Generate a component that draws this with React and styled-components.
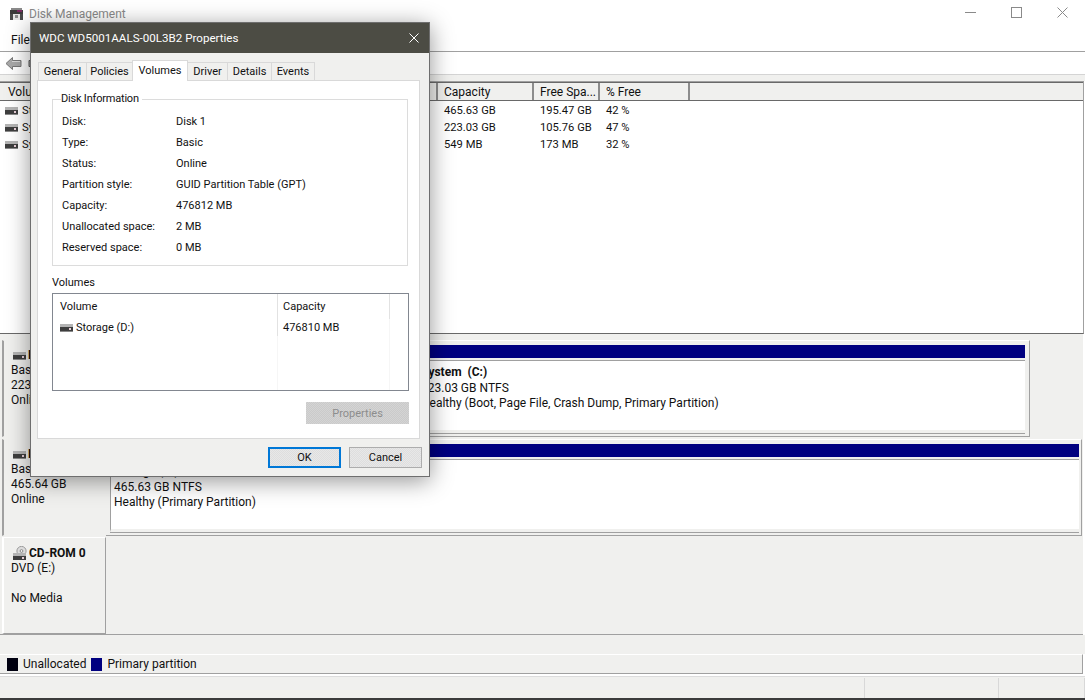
import { Fragment } from "react"
import styled, { createGlobalStyle } from "styled-components"

const GlobalStyle = createGlobalStyle`
  html, body {
    margin: 0;
    padding: 0;
    background: #fff;
  }
  body {
    font-family: "Roboto", "Liberation Sans", sans-serif;
    font-size: 12px;
    color: #111;
  }
`

const Desktop = styled.div`
  position: relative;
  width: 1085px;
  height: 700px;
  overflow: hidden;
  display: flex;
  flex-direction: column;
  background: #fff;
`

const TitleBar = styled.div`
  height: 26px;
  flex: none;
  display: flex;
  align-items: center;
  padding: 2px 0 0 9px;
  box-sizing: border-box;
  color: #8a8a8a;
  gap: 5px;
`

const WindowControls = styled.div`
  margin-left: auto;
  display: flex;
  align-items: center;
  margin-top: -3px;
`

const ControlSlot = styled.span`
  width: 46px;
  height: 14px;
  display: flex;
  align-items: center;
  justify-content: center;
`

const MenuBar = styled.div`
  height: 26px;
  flex: none;
  box-sizing: border-box;
  border-bottom: 1px solid #a0a0a0;
  display: flex;
  align-items: center;
  padding: 3px 0 0 11px;
`

const Toolbar = styled.div`
  height: 23px;
  flex: none;
  box-sizing: border-box;
  border-bottom: 1px solid #d4d4d4;
  display: flex;
  align-items: center;
  padding-left: 5px;
  gap: 6px;
`

const Band = styled.div`
  height: 6px;
  flex: none;
  background: #f0f0ee;
`

const VolumeTable = styled.div`
  height: 253px;
  flex: none;
  box-sizing: border-box;
  margin-right: 1px;
  border-top: 1px solid #a0a0a0;
  border-bottom: 1px solid #696969;
  border-right: 1px solid #a0a0a0;
  background: #fff;
`

const columns = "102px 60px 55px 70px 151px 96px 66px 90px 1fr"

const TableHead = styled.div`
  display: grid;
  grid-template-columns: ${columns};
  height: 19px;
  box-sizing: border-box;
  background: #f0f0ee;
  border-top: 1px solid #696969;
  border-bottom: 1px solid #696969;
  margin-bottom: 1px;
`

const TableRow = styled.div`
  display: grid;
  grid-template-columns: ${columns};
  align-items: center;
  height: 17px;
  font-size: 11.2px;
`

const HeadCell = styled.div`
  display: flex;
  align-items: center;
  padding: 1px 0 0 6px;
  box-sizing: border-box;
  border-right: 2px solid #8c8c8c;
  white-space: nowrap;
  overflow: hidden;
  &:first-child {
    padding-left: 8px;
  }
  &:last-child {
    border-right: none;
  }
`

const Cell = styled.div`
  display: flex;
  align-items: center;
  gap: 4px;
  padding-left: 6px;
  white-space: nowrap;
  overflow: hidden;
  &:first-child {
    padding-left: 5px;
  }
`

const DiskArea = styled.div`
  height: 301px;
  flex: none;
  box-sizing: border-box;
  background: #f0f0ee;
  padding-top: 6px;
  border-bottom: 1px solid #a0a0a0;
  margin-right: 2px;
`

const DiskRow = styled.div`
  display: grid;
  grid-template-columns: 106px 1fr;
  height: 97px;
  margin-top: ${({ $gap }) => $gap || 0}px;
`

const DiskLabel = styled.div`
  margin-left: 2px;
  padding: ${({ $raised }) => ($raised ? "8px" : "7px")} 0 0 7px;
  box-sizing: border-box;
  line-height: 15px;
  border-left: 2px solid ${({ $raised }) => ($raised ? "#fff" : "#a0a0a0")};
  border-right: 1px solid ${({ $raised }) => ($raised ? "#a0a0a0" : "#f0f0ee")};
  border-top: 1px solid ${({ $raised }) => ($raised ? "#fff" : "#f0f0ee")};
  border-bottom: 1px solid ${({ $raised }) => ($raised ? "#a0a0a0" : "#f0f0ee")};
`

const DiskTitle = styled.div`
  display: flex;
  align-items: center;
  gap: 2px;
  height: 15px;
  font-weight: 700;
  margin-left: 2px;
`

const Spacer = styled.div`
  height: 15px;
`

const PartitionRow = styled.div`
  display: flex;
  height: 100%;
`

const Partition = styled.div`
  width: ${({ $width }) => $width}px;
  flex: none;
  box-sizing: border-box;
  display: flex;
  flex-direction: column;
  padding: 4px ${({ $inset }) => $inset}px 3px 4px;
  border-top: 1px solid #fff;
  border-right: 1px solid #a0a0a0;
  border-bottom: 1px solid #a0a0a0;
`

const PartitionBar = styled.div`
  height: 13px;
  flex: none;
  background: #000080;
`

const PartitionBody = styled.div`
  flex: 1;
  margin-top: 2px;
  padding: 4px 0 0 3px;
  background: #fff;
  border-top: 1px solid #a0a0a0;
  border-left: 1px solid #a0a0a0;
  border-bottom: 3px solid #f0f0ee;
  box-shadow: 0 1px 0 #a0a0a0;
  line-height: 15.5px;
  white-space: nowrap;
  overflow: hidden;
`

const PartitionName = styled.div`
  font-weight: 700;
  white-space: pre;
`

const LegendGap = styled.div`
  height: 19px;
  flex: none;
  background: #f0f0ee;
`

const LegendBar = styled.div`
  height: 20px;
  flex: none;
  box-sizing: border-box;
  background: #f0f0ee;
  border-top: 1px solid #fff;
  border-bottom: 1px solid #a0a0a0;
  border-right: 1px solid #a0a0a0;
  margin-right: 2px;
  display: flex;
  align-items: center;
  padding-left: 7px;
`

const Swatch = styled.span`
  width: 11px;
  height: 13px;
  flex: none;
  background: ${({ $color }) => $color};
  margin-right: 5px;
`

const LegendText = styled.span`
  margin-right: 5px;
`

const StatusBar = styled.div`
  flex: 1;
  display: flex;
  background: #f0f0ee;
  border-top: 1px solid #dcdcdc;
  margin-top: 2px;
  padding-top: 1px;
  border-bottom: 2px solid #3c3c3c;
`

const StatusPane = styled.div`
  width: ${({ $width }) => $width}px;
  flex: none;
  border-right: 1px solid #d8d8d8;
`

/* properties dialog floats over the console */
const Dialog = styled.div`
  position: absolute;
  left: 30px;
  top: 22px;
  width: 400px;
  height: 455px;
  box-sizing: border-box;
  background: #f0f0ee;
  border: 1px solid #6e6e6e;
  box-shadow: 0 4px 22px rgba(0, 0, 0, 0.42);
  display: flex;
  flex-direction: column;
  font-size: 11px;
`

const DialogTitle = styled.div`
  height: 30px;
  flex: none;
  background: #4c4c44;
  color: #fff;
  display: flex;
  align-items: center;
  justify-content: space-between;
  padding: 0 10px 0 8px;
  font-size: 11.6px;
`

const TabStrip = styled.div`
  display: flex;
  align-items: flex-end;
  height: 27px;
  margin-left: 8px;
  flex: none;
`

const Tab = styled.div`
  width: ${({ $width }) => $width}px;
  height: ${({ $active }) => ($active ? "21px" : "18px")};
  box-sizing: border-box;
  display: flex;
  align-items: center;
  justify-content: center;
  padding-bottom: ${({ $active }) => ($active ? "2px" : "0")};
  border: 1px solid #d9d9d9;
  border-bottom: none;
  margin-left: -1px;
  background: ${({ $active }) => ($active ? "#fff" : "#f0f0ee")};
  position: relative;
  z-index: ${({ $active }) => ($active ? 2 : 1)};
  margin-bottom: ${({ $active }) => ($active ? "-1px" : "0")};
`

const TabPage = styled.div`
  height: 359px;
  flex: none;
  margin: 0 9px 0 6px;
  box-sizing: border-box;
  background: #fff;
  border: 1px solid #d9d9d9;
  padding: 11px 10px 0 14px;
  display: flex;
  flex-direction: column;
`

const InfoGroup = styled.fieldset`
  height: 174px;
  margin: 0 1px 0 0;
  padding: 0 0 0 9px;
  box-sizing: border-box;
  border: 1px solid #dcdcdc;
  min-inline-size: 0;
  flex: none;
`

const InfoLegend = styled.legend`
  padding: 0 3px 0 0;
  margin-left: -1px;
  line-height: 14px;
  letter-spacing: -0.2px;
`

const InfoGrid = styled.div`
  display: grid;
  grid-template-columns: 114px 1fr;
  grid-auto-rows: 21px;
  align-items: center;
  margin-top: 5px;
`

const SectionLabel = styled.div`
  margin-top: 10px;
  height: 17px;
  line-height: 14px;
`

const VolumeList = styled.div`
  height: 98px;
  flex: none;
  box-sizing: border-box;
  border: 1px solid #828790;
  display: grid;
  grid-template-columns: 225px 112px 1fr;
  grid-template-rows: 25px 17px 1fr;
`

const ListCell = styled.div`
  display: flex;
  align-items: center;
  gap: 3px;
  padding-left: ${({ $first }) => ($first ? "7px" : "5px")};
  border-right: ${({ $last }) => ($last ? "none" : "1px solid")};
  border-right-color: ${({ $faint }) => ($faint ? "#f6f6f6" : "#e2e2e2")};
`

const DisabledButton = styled.div`
  width: 103px;
  height: 22px;
  margin: 11px 0 0 auto;
  flex: none;
  display: flex;
  align-items: center;
  justify-content: center;
  color: #8d8d8d;
  background: repeating-conic-gradient(#cacaca 0 25%, #d4d4d4 0 50%) 0 0 / 2px 2px;
`

const DialogFooter = styled.div`
  flex: 1;
  display: flex;
  justify-content: flex-end;
  align-items: flex-start;
  gap: 8px;
  padding: 8px 7px 0 0;
`

const DialogButton = styled.div`
  width: 73px;
  height: 21px;
  box-sizing: border-box;
  display: flex;
  align-items: center;
  justify-content: center;
  border: ${({ $primary }) => ($primary ? "2px solid #0078d7" : "1px solid #adadad")};
  background: repeating-conic-gradient(#dedede 0 25%, #e8e8e8 0 50%) 0 0 / 2px 2px;
`

function DiskIcon() {
  return (
    <svg width="13" height="8" viewBox="0 0 13 8" style={{ flex: "none" }}>
      <rect x="0" y="0" width="13" height="3" fill="#b4b4b4" />
      <rect x="0" y="3" width="13" height="4" fill="#3e3e3e" />
      <rect x="9" y="4" width="2" height="2" fill="#e8d0d8" />
      <rect x="0" y="7" width="13" height="1" fill="#8a8a8a" />
    </svg>
  )
}

function CdIcon() {
  return (
    <svg width="14" height="15" viewBox="0 0 14 15" style={{ flex: "none" }}>
      <circle cx="8.5" cy="5" r="4.6" fill="#dcdcdc" stroke="#9a9a9a" />
      <circle cx="8.5" cy="5" r="1.4" fill="#f4f4f4" stroke="#8a8a8a" />
      <rect x="0" y="7" width="13" height="3" fill="#b4b4b4" />
      <rect x="0" y="10" width="13" height="4" fill="#3e3e3e" />
      <rect x="9" y="11" width="2" height="2" fill="#e8d0d8" />
    </svg>
  )
}

function AppIcon() {
  return (
    <svg width="15" height="13" viewBox="0 0 15 13" style={{ flex: "none" }}>
      <rect x="2" y="0" width="11" height="2" fill="#8a8a8a" />
      <rect x="1" y="2" width="13" height="4" fill="#3a3a3a" />
      <rect x="8" y="2" width="5" height="2" fill="#7a2a60" />
      <rect x="1" y="6" width="13" height="6" fill="#e4e4e4" />
      <rect x="1" y="6" width="3" height="6" fill="#4a4a4a" />
      <rect x="11" y="6" width="3" height="6" fill="#4a4a4a" />
      <rect x="6" y="7" width="3" height="3" fill="#8a8a8a" />
    </svg>
  )
}

function BackArrow() {
  return (
    <svg width="17" height="15" viewBox="0 0 17 15">
      <path d="M7.5 1.5 L1 7.5 L7.5 13.5 V10.5 H16 V4.5 H7.5 Z" fill="#a8a8a8" stroke="#777" />
      <path d="M7 5.5 H15" stroke="#d8d8d8" />
    </svg>
  )
}

function ForwardStub() {
  return (
    <svg width="17" height="15" viewBox="0 0 17 15">
      <path d="M1 4.5 H9.5 V1.5 L16 7.5 L9.5 13.5 V10.5 H1 Z" fill="#a8a8a8" stroke="#5a5a5a" />
    </svg>
  )
}

const headers = ["Volume", "", "", "", "", "Capacity", "Free Spa...", "% Free", ""]

const volumeRows = [
  ["Storage (D:)", "465.63 GB", "195.47 GB", "42 %"],
  ["System (C:)", "223.03 GB", "105.76 GB", "47 %"],
  ["System Reserved", "549 MB", "173 MB", "32 %"],
]

const diskInfo = [
  ["Disk:", "Disk 1"],
  ["Type:", "Basic"],
  ["Status:", "Online"],
  ["Partition style:", "GUID Partition Table (GPT)"],
  ["Capacity:", "476812 MB"],
  ["Unallocated space:", "2 MB"],
  ["Reserved space:", "0 MB"],
]

const tabs = [
  ["General", 49],
  ["Policies", 47],
  ["Volumes", 56],
  ["Driver", 41],
  ["Details", 45],
  ["Events", 44],
]

function PropertiesDialog() {
  return (
    <Dialog>
      <DialogTitle>
        WDC WD5001AALS-00L3B2 Properties
        <svg width="10" height="10" viewBox="0 0 10 10">
          <path d="M0.5 0.5L9.5 9.5M9.5 0.5L0.5 9.5" stroke="#fff" />
        </svg>
      </DialogTitle>
      <TabStrip>
        {tabs.map(([name, width]) => (
          <Tab key={name} $width={width} $active={name === "Volumes"}>
            {name}
          </Tab>
        ))}
      </TabStrip>
      <TabPage>
        <InfoGroup>
          <InfoLegend>Disk Information</InfoLegend>
          <InfoGrid>
            {diskInfo.map(([label, value]) => (
              <Fragment key={label}>
                <span>{label}</span>
                <span>{value}</span>
              </Fragment>
            ))}
          </InfoGrid>
        </InfoGroup>
        <SectionLabel>Volumes</SectionLabel>
        <VolumeList>
          <ListCell $first>Volume</ListCell>
          <ListCell>Capacity</ListCell>
          <ListCell $last />
          <ListCell $first>
            <DiskIcon />
            Storage (D:)
          </ListCell>
          <ListCell $faint>476810 MB</ListCell>
          <ListCell $last />
          <ListCell $faint />
          <ListCell $faint />
          <ListCell $last />
        </VolumeList>
        <DisabledButton>Properties</DisabledButton>
      </TabPage>
      <DialogFooter>
        <DialogButton $primary>OK</DialogButton>
        <DialogButton>Cancel</DialogButton>
      </DialogFooter>
    </Dialog>
  )
}

export default function App() {
  return (
    <Desktop>
      <GlobalStyle />
      <TitleBar>
        <AppIcon />
        Disk Management
        <WindowControls>
          <ControlSlot>
            <svg width="11" height="11" viewBox="0 0 11 11">
              <path d="M0 5.5H11" stroke="#8a8a8a" />
            </svg>
          </ControlSlot>
          <ControlSlot>
            <svg width="11" height="11" viewBox="0 0 11 11">
              <rect x="0.5" y="0.5" width="10" height="10" fill="none" stroke="#8a8a8a" />
            </svg>
          </ControlSlot>
          <ControlSlot>
            <svg width="11" height="11" viewBox="0 0 11 11">
              <path d="M0.5 0.5L10.5 10.5M10.5 0.5L0.5 10.5" stroke="#8a8a8a" />
            </svg>
          </ControlSlot>
        </WindowControls>
      </TitleBar>
      <MenuBar>File</MenuBar>
      <Toolbar>
        <BackArrow />
        <ForwardStub />
      </Toolbar>
      <Band />
      <VolumeTable>
        <TableHead>
          {headers.map((h, i) => (
            <HeadCell key={i}>{h}</HeadCell>
          ))}
        </TableHead>
        {volumeRows.map(([name, capacity, free, percent]) => (
          <TableRow key={name}>
            <Cell>
              <DiskIcon />
              {name}
            </Cell>
            <Cell />
            <Cell />
            <Cell />
            <Cell />
            <Cell>{capacity}</Cell>
            <Cell>{free}</Cell>
            <Cell>{percent}</Cell>
          </TableRow>
        ))}
      </VolumeTable>
      <DiskArea>
        <DiskRow>
          <DiskLabel>
            <DiskTitle>
              <DiskIcon />
              Disk 0
            </DiskTitle>
            <div>Basic</div>
            <div>223.57 GB</div>
            <div>Online</div>
          </DiskLabel>
          <PartitionRow>
            <Partition $width={307} $inset={4}>
              <PartitionBar />
              <PartitionBody />
            </Partition>
            <Partition $width={617} $inset={4}>
              <PartitionBar />
              <PartitionBody>
                <PartitionName>System  (C:)</PartitionName>
                <div>223.03 GB NTFS</div>
                <div>Healthy (Boot, Page File, Crash Dump, Primary Partition)</div>
              </PartitionBody>
            </Partition>
          </PartitionRow>
        </DiskRow>
        <DiskRow $gap={2}>
          <DiskLabel>
            <DiskTitle>
              <DiskIcon />
              Disk 1
            </DiskTitle>
            <div>Basic</div>
            <div>465.64 GB</div>
            <div>Online</div>
          </DiskLabel>
          <PartitionRow>
            <Partition $width={976} $inset={2}>
              <PartitionBar />
              <PartitionBody>
                <PartitionName>Storage (D:)</PartitionName>
                <div>465.63 GB NTFS</div>
                <div>Healthy (Primary Partition)</div>
              </PartitionBody>
            </Partition>
          </PartitionRow>
        </DiskRow>
        <DiskRow $gap={1}>
          <DiskLabel $raised>
            <DiskTitle>
              <CdIcon />
              CD-ROM 0
            </DiskTitle>
            <div>DVD (E:)</div>
            <Spacer />
            <div>No Media</div>
          </DiskLabel>
        </DiskRow>
      </DiskArea>
      <LegendGap />
      <LegendBar>
        <Swatch $color="#000010" />
        <LegendText>Unallocated</LegendText>
        <Swatch $color="#000080" />
        <LegendText>Primary partition</LegendText>
      </LegendBar>
      <StatusBar>
        <StatusPane $width={864} />
        <StatusPane $width={133} />
        <StatusPane $width={85} />
      </StatusBar>
      <PropertiesDialog />
    </Desktop>
  )
}
